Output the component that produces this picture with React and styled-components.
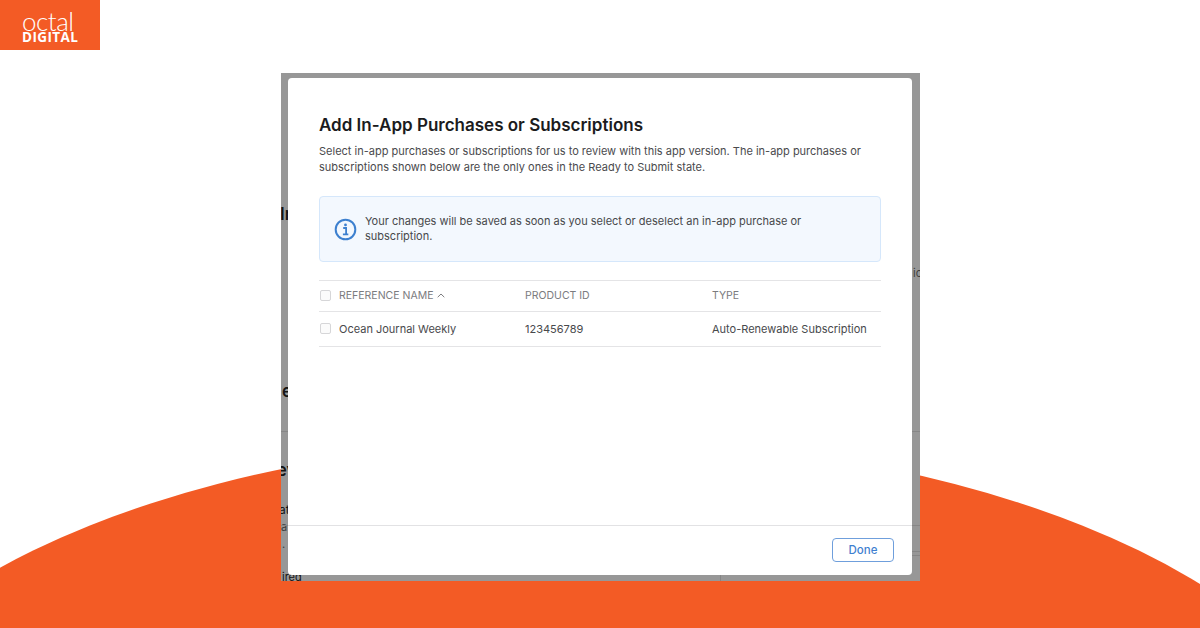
import React from "react";
import styled, { createGlobalStyle } from "styled-components";

const GlobalStyle = createGlobalStyle`
  html, body {
    margin: 0;
    padding: 0;
    background: #fff;
    font-family: Inter, "Liberation Sans", sans-serif;
  }
`;

const Page = styled.div`
  position: relative;
  width: 1200px;
  height: 628px;
  overflow: hidden;
  background: #fff;
  padding-top: 73px;
  box-sizing: border-box;
`;

const Arc = styled.svg`
  position: absolute;
  left: 0;
  top: 0;
`;

const Logo = styled.div`
  position: absolute;
  left: 0;
  top: 0;
  width: 100px;
  height: 50px;
  background: #f35b25;
  color: #fff;
  display: flex;
  flex-direction: column;
  align-items: flex-start;
  padding: 10px 0 0 22px;
  box-sizing: border-box;
`;

const LogoTop = styled.span`
  font-family: Lato, sans-serif;
  font-weight: 300;
  font-size: 26px;
  line-height: 22px;
  letter-spacing: -0.5px;
`;

const LogoBottom = styled.span`
  font-family: "Open Sans", sans-serif;
  font-weight: 700;
  font-size: 13.5px;
  line-height: 11px;
  letter-spacing: 0.4px;
`;

const Backdrop = styled.div`
  position: relative;
  width: 639px;
  height: 508px;
  margin-left: 281px;
  background: #979797;
  overflow: hidden;
  padding: 5px 8px 6px 7px;
  box-sizing: border-box;
`;

const Ghost = styled.span`
  position: absolute;
  left: ${(p) => p.$x}px;
  top: ${(p) => p.$y}px;
  color: ${(p) => p.$color || "#141414"};
  font-size: ${(p) => p.$size || 11}px;
  font-weight: ${(p) => p.$weight || 400};
  line-height: 1;
  white-space: nowrap;
`;

const GhostLine = styled.div`
  position: absolute;
  left: ${(p) => p.$x}px;
  top: ${(p) => p.$y}px;
  width: ${(p) => p.$w}px;
  height: ${(p) => p.$h || 1}px;
  background: #868686;
`;

const Modal = styled.div`
  position: relative;
  height: 497px;
  background: #fff;
  border-radius: 4px;
  display: flex;
  flex-direction: column;
`;

const Body = styled.div`
  flex: 1;
  padding: 37px 31px 0;
`;

const Title = styled.h1`
  margin: 0;
  font-size: 17px;
  line-height: 20px;
  font-weight: 600;
  color: #1b1b1d;
`;

const Description = styled.p`
  margin: 9px 0 0;
  font-size: 11px;
  line-height: 15.5px;
  color: #4a4a4d;
`;

const Notice = styled.div`
  margin-top: 21px;
  height: 66px;
  box-sizing: border-box;
  display: flex;
  align-items: center;
  gap: 8px;
  padding: 0 14px;
  background: #f3f8fe;
  border: 1px solid #d5e7fb;
  border-radius: 4px;
`;

const NoticeText = styled.div`
  width: 480px;
  font-size: 11px;
  line-height: 15.5px;
  color: #47484b;
`;

const Table = styled.div`
  margin-top: 18px;
  border-top: 1px solid #e4e4e6;
`;

const Row = styled.div`
  display: grid;
  grid-template-columns: 206px 187px 1fr;
  align-items: center;
  height: ${(p) => p.$h}px;
  box-sizing: border-box;
  padding-bottom: 1px;
  border-bottom: 1px solid #e4e4e6;
  font-size: ${(p) => (p.$head ? "10.5px" : "11px")};
  color: ${(p) => (p.$head ? "#7b7b7e" : "#48494c")};
`;

const NameCell = styled.div`
  display: flex;
  align-items: center;
  gap: 8px;
  padding-left: 1px;
`;

const Check = styled.span`
  width: 11px;
  height: 11px;
  box-sizing: border-box;
  border: 1px solid #d6d6d8;
  border-radius: 2px;
  background: #fbfbfb;
`;

const SortArrow = styled.svg`
  margin-left: -4px;
`;

const Footer = styled.div`
  height: 50px;
  box-sizing: border-box;
  border-top: 1px solid #e2e2e4;
  display: flex;
  align-items: center;
  justify-content: flex-end;
  padding: 0 18px 2px 0;
`;

const DoneButton = styled.button`
  width: 62px;
  height: 24px;
  padding: 0;
  background: #fff;
  border: 1px solid #6f9fdc;
  border-radius: 4px;
  color: #3f7fd0;
  font-family: inherit;
  font-size: 11.5px;
  font-weight: 500;
`;

function InfoIcon() {
  return (
    <svg width="23" height="23" viewBox="0 0 23 23" fill="none">
      <circle cx="11.5" cy="11.5" r="9.8" stroke="#3d80cf" strokeWidth="2" />
      <circle cx="11.5" cy="6.9" r="1.4" fill="#3d80cf" />
      <path d="M9.2 10h2.9v6.2M8.9 16.4h5.4" stroke="#3d80cf" strokeWidth="1.8" />
    </svg>
  );
}

function SortIcon() {
  return (
    <SortArrow width="8" height="5" viewBox="0 0 8 5" fill="none">
      <path d="M.7 4.2 4 1l3.3 3.2" stroke="#7b7b7e" strokeWidth="1" />
    </SortArrow>
  );
}

export default function App() {
  return (
    <Page>
      <GlobalStyle />
      <Arc width="1200" height="628" viewBox="0 0 1200 628">
        <ellipse cx="586" cy="820" rx="782" ry="381" fill="#f35b25" />
      </Arc>
      <Logo>
        <LogoTop>octal</LogoTop>
        <LogoBottom>DIGITAL</LogoBottom>
      </Logo>
      <Backdrop>
        <Ghost $x={-1} $y={133} $size={17} $weight={600}>
          In
        </Ghost>
        <Ghost $x={632} $y={195} $color="#3f3f3f">
          ic
        </Ghost>
        <Ghost $x={1} $y={310} $size={17} $weight={600}>
          e
        </Ghost>
        <Ghost $x={-15} $y={389} $size={17} $weight={600}>
          Rev
        </Ghost>
        <Ghost $x={-2} $y={431} $size={12}>
          at
        </Ghost>
        <Ghost $x={0} $y={449} $color="#3f3f3f">
          a
        </Ghost>
        <Ghost $x={1} $y={466} $color="#3f3f3f">
          .
        </Ghost>
        <Ghost $x={1} $y={499}>
          ired
        </Ghost>
        <GhostLine $x={0} $y={358} $w={639} />
        <GhostLine $x={0} $y={452} $w={639} />
        <GhostLine $x={630} $y={478} $w={9} />
        <GhostLine $x={630} $y={482} $w={9} />
        <GhostLine $x={439} $y={502} $w={1} $h={6} />
        <Modal>
          <Body>
            <Title>Add In-App Purchases or Subscriptions</Title>
            <Description>
              Select in-app purchases or subscriptions for us to review with
              this app version. The in-app purchases or
              <br />
              subscriptions shown below are the only ones in the Ready to Submit
              state.
            </Description>
            <Notice>
              <InfoIcon />
              <NoticeText>
                Your changes will be saved as soon as you select or deselect an
                in-app purchase or subscription.
              </NoticeText>
            </Notice>
            <Table>
              <Row $head $h={31}>
                <NameCell>
                  <Check />
                  <span>REFERENCE NAME</span>
                  <SortIcon />
                </NameCell>
                <div>PRODUCT ID</div>
                <div>TYPE</div>
              </Row>
              <Row $h={35}>
                <NameCell>
                  <Check />
                  <span>Ocean Journal Weekly</span>
                </NameCell>
                <div>123456789</div>
                <div>Auto-Renewable Subscription</div>
              </Row>
            </Table>
          </Body>
          <Footer>
            <DoneButton>Done</DoneButton>
          </Footer>
        </Modal>
      </Backdrop>
    </Page>
  );
}
